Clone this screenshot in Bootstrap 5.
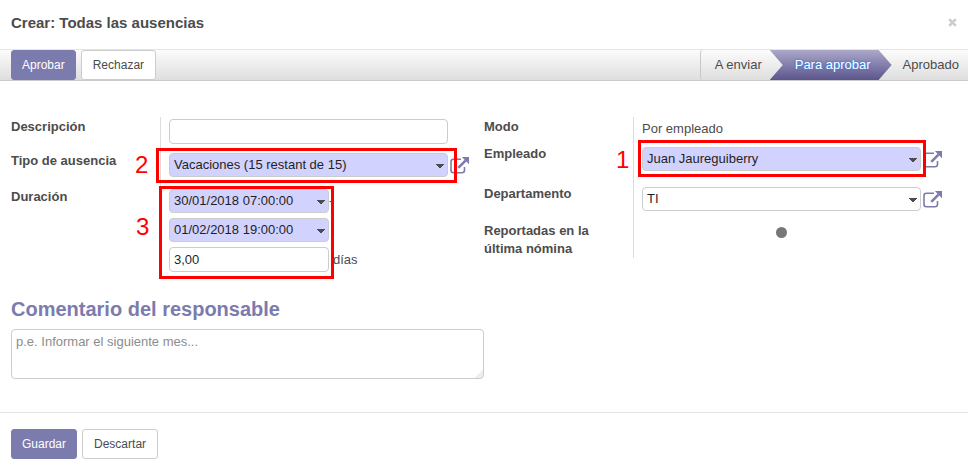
<!DOCTYPE html>
<html lang="es">
<head>
<meta charset="utf-8">
<meta name="viewport" content="width=device-width, initial-scale=1">
<title>Crear: Todas las ausencias</title>
<link href="https://cdn.jsdelivr.net/npm/bootstrap@5.3.0/dist/css/bootstrap.min.css" rel="stylesheet">
<style>
  body { font-family: "Liberation Sans", Arial, sans-serif; font-size: 13px; line-height: 18px; color: #4c4c4c; background: #fff; }
  .dialog-head { height: 50px; padding: 0 11px; border-bottom: 1px solid #e5e5e5; }
  .dialog-title { font-size: 15px; font-weight: bold; line-height: 20px; margin: 0; padding-bottom: 4px; }
  .dialog-close { border: 0; background: none; padding: 0; width: 9px; height: 9px; line-height: 0; color: #ccc; margin-bottom: 4px; }
  .dialog-close svg { display: block; }
  .action-bar { border-bottom: 1px solid #cacaca; background: linear-gradient(#fcfcfc, #dedede); padding-left: 11px; }
  .btn-set { gap: 5px; }
  .app-btn { --bs-btn-font-size: 12px; --bs-btn-line-height: 18px; --bs-btn-padding-x: 10px; --bs-btn-padding-y: 5px; --bs-btn-border-radius: 3px; }
  .app-main { --bs-btn-color: #fff; --bs-btn-bg: #7c7bad; --bs-btn-border-color: #7c7bad; --bs-btn-hover-color: #fff; --bs-btn-hover-bg: #6a69a0; }
  .app-plain { --bs-btn-color: #4c4c4c; --bs-btn-bg: #fff; --bs-btn-border-color: #ccc; --bs-btn-hover-bg: #eee; --bs-btn-hover-border-color: #bbb; --bs-btn-padding-x: 11px; }
  .steps { list-style: none; margin: 0; padding: 0; line-height: 30px; }
  .step-first { border-left: 1px solid #c9c9c9; border-radius: 3px 0 0 3px; padding: 0 8px 0 14px; }
  .step-now { color: #fff; padding: 0 21px 0 25px; background: linear-gradient(#aba8cb, #5b558b); clip-path: polygon(0 0, calc(100% - 13px) 0, 100% 50%, calc(100% - 13px) 100%, 0 100%, 13px 50%); text-shadow: 0 0 2px #2f7fe6, 0 0 2px #2f7fe6; }
  .step-last { padding: 0 9px 0 11px; }
  .sheet { padding: 36px 11px 0; }
  .half { flex: 1 1 0; min-width: 0; --cell-top: 2px; --link-top: 6px; }
  .half-end { --cell-top: 3px; --link-top: 7px; }
  .field-row { display: grid; grid-template-columns: 149px minmax(0, 1fr); }
  .field-name { font-weight: bold; padding: 1px 12px 0 0; }
  .field-cell { border-left: 1px solid #ddd; padding: var(--cell-top) 36px 0 8px; position: relative; }
  .row-a { min-height: 34px; } .row-b { min-height: 36px; }
  .row-d { min-height: 27px; } .row-e { min-height: 40px; } .row-f { min-height: 37px; }
  .box { display: block; width: 100%; height: 24px; border: 1px solid #ccc; border-radius: 4px; padding: 0 4px; font-size: 13px; line-height: 18px; color: #1f1f1f; background-color: #fff; }
  .box:focus { outline: 1px solid #7c7bad; }
  select.box { appearance: none; padding-right: 20px; background-image: linear-gradient(to bottom right, #4c4c4c 50%, transparent 51%), linear-gradient(to bottom left, #4c4c4c 50%, transparent 51%); background-size: 4px 4px; background-repeat: no-repeat; background-position: right 3px top 10px, right 7px top 10px; }
  select.required { background-color: #d2d2ff; }
  .box-tall { height: 25px; }
  .brief { width: 160px; }
  .time-stack { gap: 5px; }
  .open-link { position: absolute; top: var(--link-top); right: 14px; line-height: 0; color: #7c7bad; }
  .outline { position: absolute; border: 3px solid #f00; pointer-events: none; }
  .callout { position: absolute; font-size: 24px; line-height: 24px; color: #f00; }
  .outline-type { left: -5px; right: 27px; top: -3px; height: 35px; }
  .outline-time { left: -2px; width: 175px; top: -1px; height: 93px; }
  .outline-staff { left: 4px; right: 31px; top: -4px; height: 37px; }
  .callout-type { left: -26px; top: 2px; }
  .callout-time { left: -25px; top: 28px; }
  .callout-staff { left: -18px; top: 4px; }
  .dot { display: block; width: 11px; height: 11px; margin-top: 3px; padding: 0; border: 0; border-radius: 50%; background: #777; }
  .section-title { font-size: 20px; line-height: 24px; font-weight: bold; color: #7c7bad; margin: 25px 0 8px; }
  .note { height: 50px; width: 50%; padding: 3px 4px; resize: none; background: linear-gradient(135deg, #fff 50%, #eee 51%) right bottom / 9px 9px no-repeat #fff; }
  .note::placeholder { color: #8c8c8c; opacity: 1; }
  .dialog-foot { margin-top: 33px; padding: 16px 11px 8px; border-top: 1px solid #e5e5e5; }
</style>
<script src="https://cdn.jsdelivr.net/npm/bootstrap@5.3.0/dist/js/bootstrap.bundle.min.js"></script>
</head>
<body>
<svg class="d-none" aria-hidden="true">
  <symbol id="open-icon" viewBox="0 0 20 17">
    <path d="M11 2.2H3.5Q1 2.2 1 4.7v8.6q0 2.5 2.500 2.500h8.500q2.500 0 2.500-2.500V10" fill="none" stroke="currentColor" stroke-width="1.600"/>
    <path d="M8.300 10.800 15.500 3.600" fill="none" stroke="currentColor" stroke-width="2.600"/>
    <path d="M11.800 0H19v7.200Z" fill="currentColor"/>
  </symbol>
</svg>
<header class="dialog-head d-flex align-items-center justify-content-between">
  <h1 class="dialog-title">Crear: Todas las ausencias</h1>
  <button type="button" class="dialog-close" aria-label="Cerrar"><svg width="9" height="9" viewBox="0 0 9 9"><path d="M1.200 1.200 7.800 7.800M7.800 1.200 1.200 7.800" stroke="currentColor" stroke-width="2.600"/></svg></button>
</header>
<div class="action-bar d-flex justify-content-between">
  <div class="d-flex btn-set">
    <button type="button" class="btn app-btn app-main">Aprobar</button>
    <button type="button" class="btn app-btn app-plain">Rechazar</button>
  </div>
  <ol class="steps d-flex">
    <li class="step-first">A enviar</li>
    <li class="step-now" aria-current="step">Para aprobar</li>
    <li class="step-last">Aprobado</li>
  </ol>
</div>
<form>
<main class="sheet">
  <div class="d-flex">
    <div class="half">
      <div class="field-row row-a">
        <label class="field-name" for="desc">Descripción</label>
        <div class="field-cell"><input class="box box-tall" id="desc" type="text"></div>
      </div>
      <div class="field-row row-b">
        <label class="field-name" for="kind">Tipo de ausencia</label>
        <div class="field-cell">
          <select class="box required" id="kind"><option>Vacaciones (15 restant de 15)</option></select>
          <a href="#" class="open-link" aria-label="Abrir tipo de ausencia"><svg width="20" height="17"><use href="#open-icon"/></svg></a>
          <span class="outline outline-type"></span><span class="callout callout-type">2</span>
        </div>
      </div>
      <div class="field-row">
        <label class="field-name" for="from">Duración</label>
        <div class="field-cell">
          <div class="d-flex flex-column time-stack">
            <div class="d-flex align-items-center"><select class="box required brief" id="from"><option>30/01/2018 07:00:00</option></select><span>-</span></div>
            <select class="box required brief" aria-label="Hasta"><option>01/02/2018 19:00:00</option></select>
            <div class="d-flex align-items-center gap-1"><input class="box box-tall brief" id="days" type="text" value="3,00"><label for="days">días</label></div>
          </div>
          <span class="outline outline-time"></span><span class="callout callout-time">3</span>
        </div>
      </div>
    </div>
    <div class="half half-end">
      <div class="field-row row-d">
        <span class="field-name">Modo</span>
        <div class="field-cell">Por empleado</div>
      </div>
      <div class="field-row row-e">
        <label class="field-name" for="staff">Empleado</label>
        <div class="field-cell">
          <select class="box required" id="staff"><option>Juan Jaureguiberry</option></select>
          <a href="#" class="open-link" aria-label="Abrir empleado"><svg width="20" height="17"><use href="#open-icon"/></svg></a>
          <span class="outline outline-staff"></span><span class="callout callout-staff">1</span>
        </div>
      </div>
      <div class="field-row row-f">
        <label class="field-name" for="dept">Departamento</label>
        <div class="field-cell">
          <select class="box" id="dept"><option>TI</option></select>
          <a href="#" class="open-link" aria-label="Abrir departamento"><svg width="20" height="17"><use href="#open-icon"/></svg></a>
        </div>
      </div>
      <div class="field-row">
        <label class="field-name" for="reported">Reportadas en la última nómina</label>
        <div class="field-cell d-flex justify-content-center"><button type="button" class="dot" id="reported"></button></div>
      </div>
    </div>
  </div>
  <h2 class="section-title"><label for="note">Comentario del responsable</label></h2>
  <textarea class="box note" id="note" placeholder="p.e. Informar el siguiente mes..."></textarea>
</main>
<footer class="dialog-foot d-flex btn-set">
  <button type="button" class="btn app-btn app-main">Guardar</button>
  <button type="button" class="btn app-btn app-plain">Descartar</button>
</footer>
</form>
</body>
</html>
